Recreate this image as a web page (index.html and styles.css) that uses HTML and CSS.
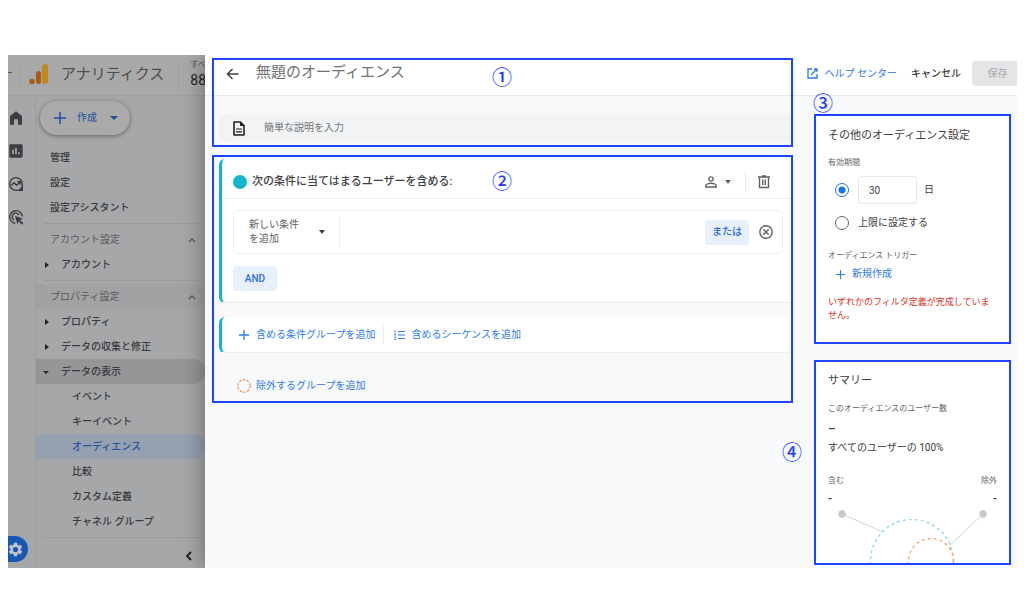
FILE: index.html
```html
<!DOCTYPE html>
<html lang="ja">
<head>
<meta charset="utf-8">
<meta name="viewport" content="width=device-width, initial-scale=1">
<title>アナリティクス</title>
<link rel="stylesheet" href="styles.css">
</head>
<body>
<div class="shell">
  <div class="app">
    <header class="app-header">
      <span class="menu-stub"></span>
      <svg class="logo" width="20" height="22" viewBox="0 0 20 22"><rect x="13" y="1" width="6" height="20" rx="3" fill="#bd8a1c"/><rect x="7" y="8" width="5" height="13" rx="2.500" fill="#ad5a14"/><circle cx="3" cy="18.500" r="2.700" fill="#ad5a14"/></svg>
      <span class="app-name">アナリティクス</span>
      <span class="account"><small>すべ</small><b>88</b></span>
    </header>
    <div class="app-body">
      <nav class="rail" aria-label="メイン">
        <a href="#" aria-label="ホーム"><svg width="16" height="16" viewBox="0 0 24 24"><path fill="#3b3d40" d="M12 2 3 9v13h6v-8h6v8h6V9z"/></svg></a>
        <a href="#" aria-label="レポート"><svg width="16" height="16" viewBox="0 0 24 24"><rect x="2" y="2" width="20" height="20" rx="2" fill="#3b3d40"/><path stroke="#a6a7a9" stroke-width="2.500" d="M7.500 10v7M12 7v10M16.500 14v3"/></svg></a>
        <a href="#" aria-label="探索"><svg width="16" height="16" viewBox="0 0 24 24" fill="none" stroke="#3b3d40" stroke-width="2"><path d="M21.500 12A9.500 9.500 0 1 0 12 21.500h9.500z"/><path d="m5 14 4-4 4 4 5-5M14 8.500h4.500V13"/><path fill="#3b3d40" d="m17 21 4-4v4z"/></svg></a>
        <a href="#" aria-label="広告"><svg width="16" height="16" viewBox="0 0 24 24" fill="none" stroke="#3b3d40" stroke-width="2"><path d="M11 21.500A9.500 9.500 0 1 1 21.500 11"/><path d="M9 16.500A5.500 5.500 0 1 1 16.500 9"/><path fill="#3b3d40" stroke="none" d="m10.500 10.500 12 4-4.500 2 5 5-2 2-5-5-2 4.500z"/></svg></a>
        <a href="#" class="gear" aria-label="管理"><svg width="17" height="17" viewBox="0 0 24 24"><path fill="#bcc3ce" d="M19.140 12.940c.04-.3.06-.61.06-.94s-.02-.64-.07-.94l2.030-1.580a.49.49 0 0 0 .12-.61l-1.920-3.320a.49.49 0 0 0-.59-.22l-2.390.96a7 7 0 0 0-1.620-.94l-.36-2.540a.48.48 0 0 0-.48-.41h-3.840a.48.48 0 0 0-.47.41l-.36 2.540a7 7 0 0 0-1.620.94l-2.390-.96a.49.49 0 0 0-.59.22L2.740 8.870a.48.48 0 0 0 .12.61l2.030 1.580a6 6 0 0 0 0 1.880l-2.030 1.580a.49.49 0 0 0-.12.61l1.920 3.320c.12.22.37.29.59.22l2.390-.96c.5.38 1.030.7 1.620.94l.36 2.540c.05.24.24.41.48.41h3.840c.24 0 .44-.17.47-.41l.36-2.540a7 7 0 0 0 1.620-.94l2.390.96c.22.08.47 0 .59-.22l1.920-3.320a.48.48 0 0 0-.12-.61zM12 15.600a3.600 3.600 0 1 1 0-7.200 3.600 3.600 0 0 1 0 7.200z"/></svg></a>
      </nav>
      <nav class="side" aria-label="管理メニュー">
        <button class="create"><svg width="12" height="12" viewBox="0 0 12 12"><path stroke="currentColor" stroke-width="1.500" d="M6 0v12M0 6h12"/></svg><span>作成</span><i class="caret"></i></button>
        <a class="row" href="#">管理</a>
        <a class="row" href="#">設定</a>
        <a class="row" href="#">設定アシスタント</a>
        <hr>
        <a class="row section" href="#">アカウント設定<svg width="8" height="6" viewBox="0 0 8 6"><path d="m1 5 3-3 3 3" fill="none" stroke="currentColor" stroke-width="1.300"/></svg></a>
        <a class="row parent" href="#">アカウント</a>
        <hr>
        <a class="row section shaded" href="#">プロパティ設定<svg width="8" height="6" viewBox="0 0 8 6"><path d="m1 5 3-3 3 3" fill="none" stroke="currentColor" stroke-width="1.300"/></svg></a>
        <a class="row parent" href="#">プロパティ</a>
        <a class="row parent" href="#">データの収集と修正</a>
        <a class="row parent open" href="#">データの表示</a>
        <a class="row child" href="#">イベント</a>
        <a class="row child" href="#">キーイベント</a>
        <a class="row child current" href="#">オーディエンス</a>
        <a class="row child" href="#">比較</a>
        <a class="row child" href="#">カスタム定義</a>
        <a class="row child" href="#">チャネル グループ</a>
        <hr>
        <button class="collapse" aria-label="折りたたむ"><svg width="8" height="10" viewBox="0 0 8 10"><path d="M6 1 2 5l4 4" fill="none" stroke="#1c1d1e" stroke-width="1.800"/></svg></button>
      </nav>
    </div>
  </div>

  <main class="panel">
    <header class="panel-header">
      <button class="plain" aria-label="戻る"><svg width="13" height="12" viewBox="0 0 13 12"><path d="M12.500 6H1.500M6.500 1l-5 5 5 5" fill="none" stroke="#3c4043" stroke-width="1.500"/></svg></button>
      <input class="title" type="text" placeholder="無題のオーディエンス" aria-label="オーディエンス名">
      <a class="help" href="#"><svg width="11" height="11" viewBox="0 0 11 11"><path d="M5 1H1v9h9V6M7 1h3v3M10 1 4 7" fill="none" stroke="currentColor" stroke-width="1.300"/></svg>ヘルプ センター</a>
      <button class="plain cancel">キャンセル</button>
      <button class="save" disabled>保存</button>
    </header>
    <div class="panel-body">
      <div class="builder">
        <label class="description">
          <svg width="14" height="15" viewBox="0 0 14 15"><path d="M2 1h6.500L12 4.500V14H2z" fill="none" stroke="#202124" stroke-width="1.600" stroke-linejoin="round"/><path d="M8 1v4h4z" fill="#202124"/><path d="M4 8h6M4 10.800h6" stroke="#202124" stroke-width="1.200"/></svg>
          <input type="text" placeholder="簡単な説明を入力" aria-label="説明">
        </label>
        <section class="group">
          <div class="group-head">
            <span class="dot"></span>
            <h2>次の条件に当てはまるユーザーを含める:</h2>
            <button class="plain scope" aria-label="スコープ"><svg width="12" height="12" viewBox="0 0 12 12" fill="none" stroke="#5f6368" stroke-width="1.400"><circle cx="6" cy="3" r="2.100"/><path d="M.8 11V9.500C.8 8 4 7.200 6 7.200S11.200 8 11.200 9.500V11z"/></svg><i class="caret"></i></button>
            <button class="plain trash" aria-label="削除"><svg width="12" height="14" viewBox="0 0 12 14" fill="none" stroke="#5f6368" stroke-width="1.400"><path d="M0 2h12M4 1h4M1.500 2v10.500h9V2M4.700 4.500V10M7.300 4.500V10"/></svg></button>
          </div>
          <div class="group-body">
            <div class="condition">
              <button class="add-condition"><span>新しい条件<br>を追加</span><i class="caret"></i></button>
              <button class="chip">または</button>
              <button class="plain" aria-label="条件を削除"><svg width="14" height="14" viewBox="0 0 14 14" fill="none" stroke="#5f6368" stroke-width="1.400"><circle cx="7" cy="7" r="6.200"/><path d="m4.300 4.300 5.400 5.400m0-5.400-5.400 5.400"/></svg></button>
            </div>
            <button class="chip">AND</button>
          </div>
        </section>
        <section class="group adders">
          <button class="link"><svg width="10" height="10" viewBox="0 0 10 10"><path stroke="currentColor" stroke-width="1.300" d="M5 0v10M0 5h10"/></svg>含める条件グループを追加</button>
          <button class="link"><svg width="11" height="10" viewBox="0 0 11 10"><path d="M4 1.500h7M4 5h7M4 8.500h7" stroke="currentColor" stroke-width="1.200"/><path d="M0 .8h1.300v2M0 4h2L.3 6H2M0 7.500h1.800v2H0" fill="none" stroke="currentColor" stroke-width=".7"/></svg>含めるシーケンスを追加</button>
        </section>
        <button class="link exclude"><svg width="14" height="14" viewBox="0 0 14 14"><circle cx="7" cy="7" r="6.200" fill="none" stroke="#f08a4b" stroke-width="1.200" stroke-dasharray="2.400 1.500"/></svg>除外するグループを追加</button>
      </div>

      <aside class="info">
        <section class="card settings">
          <h2>その他のオーディエンス設定</h2>
          <p class="caption">有効期間</p>
          <div class="choice days"><input type="radio" name="term" id="term-days" checked><input class="number" type="text" value="30" aria-label="有効期間の日数"><label for="term-days">日</label></div>
          <div class="choice"><input type="radio" name="term" id="term-max"><label for="term-max">上限に設定する</label></div>
          <p class="caption trigger">オーディエンス トリガー</p>
          <button class="link create-trigger"><svg width="9" height="9" viewBox="0 0 10 10"><path stroke="currentColor" stroke-width="1.300" d="M5 0v10M0 5h10"/></svg>新規作成</button>
          <p class="error">いずれかのフィルタ定義が完成していません。</p>
        </section>
        <section class="card summary">
          <h2>サマリー</h2>
          <p class="caption">このオーディエンスのユーザー数</p>
          <p class="value">–</p>
          <p class="share">すべてのユーザーの 100%</p>
          <div class="split caption"><span>含む</span><span>除外</span></div>
          <div class="split value"><span>-</span><span>-</span></div>
          <svg class="venn" viewBox="0 0 193 58" fill="none"><path d="m26 9 41 18M167 9l-34 32" stroke="#d4d4d4"/><circle cx="26" cy="9" r="3.700" fill="#c8c8c8"/><circle cx="167" cy="9" r="3.700" fill="#c8c8c8"/><circle cx="96" cy="56" r="41.500" stroke="#93d9e8" stroke-width="1.400" stroke-dasharray="3 3"/><circle cx="115" cy="56" r="22.500" stroke="#f7a678" stroke-width="1.400" stroke-dasharray="3 3"/></svg>
        </section>
      </aside>
    </div>
    <div class="callout callout-name"><span class="num">①</span></div>
    <div class="callout callout-builder"><span class="num">②</span></div>
    <span class="num num-settings">③</span>
    <span class="num num-summary">④</span>
  </main>
</div>
</body>
</html>
```
FILE: styles.css
```css
* { box-sizing: border-box; }
body {
  margin: 0;
  padding: 55px 7px 46px 8px;
  background: #fff;
  color: #3c4043;
  font: 10px/16px Roboto, "Noto Sans CJK JP", sans-serif;
}
h2, p { margin: 0; font-weight: 400; }
a { color: inherit; text-decoration: none; }
button, input { font: inherit; color: inherit; }
button { padding: 0; border: 0; background: none; }
svg { display: block; flex: none; }
.plain { display: flex; align-items: center; }

.shell { display: grid; grid-template-columns: 197px minmax(0, 1fr); overflow: hidden; }

/* dimmed application behind the panel */
.app { display: flex; flex-direction: column; min-width: 0; overflow: hidden; background: #a6a7a9; color: #3a3b3e; }
.app-header { display: flex; align-items: center; height: 41px; padding-bottom: 2px; background: #a9a9a9; border-bottom: 1px solid #9fa0a1; white-space: nowrap; }
.menu-stub { flex: none; width: 12px; height: 24px; border-right: 1px solid #9f9f9f; background: linear-gradient(#555, #555) 0 10px / 4px 1px no-repeat; }
.logo { margin-left: 9px; }
.app-name { margin-left: 12px; font-size: 15px; color: #4c4d50; }
.account { display: flex; flex-direction: column; margin-left: 14px; padding-left: 11px; border-left: 1px solid #a0a0a0; color: #222; }
.account small { font-size: 8px; line-height: 12px; color: #4c4d50; }
.account b { font-weight: 400; font-size: 14px; line-height: 18px; }
.app-body { flex: 1; display: flex; }
.rail { display: flex; flex-direction: column; gap: 17px; width: 28px; padding-top: 14px; border-right: 1px solid #9c9d9f; }
.gear { display: flex; align-items: center; justify-content: flex-end; width: 20px; height: 26px; margin: auto 0 6px; padding-right: 4px; border-radius: 0 13px 13px 0; background: #1858b0; }
.side { flex: 1; display: flex; flex-direction: column; padding-top: 5px; }
.create { display: flex; align-items: center; align-self: flex-start; gap: 11px; width: 90px; height: 34px; margin: 0 0 10px 4px; padding-left: 14px; border-radius: 17px; background: #aaa; color: #1d4f9e; box-shadow: 0 1px 4px rgba(0, 0, 0, .4); }
.caret { display: block; border: 3px solid transparent; border-top: 4px solid; border-bottom: 0; }
.create .caret { margin-left: 2px; border-width: 4px 4px 0; }
.row { display: flex; align-items: center; height: 25px; padding: 1px 9px 0 14px; border-radius: 0 12px 12px 0; font-weight: 500; }
.section { justify-content: space-between; color: #58595c; font-weight: 400; }
.shaded { background: #a1a2a3; }
.parent { gap: 12px; padding-left: 9px; }
.parent::before { content: ""; border: 3px solid transparent; border-left: 4px solid #222; border-right: 0; }
.open { gap: 12px; padding-left: 7px; background: #959698; }
.open::before { border: 3px solid transparent; border-top: 3px solid #222; border-bottom: 0; }
.child { padding-left: 36px; }
.current { background: #95a0b1; color: #2a559c; }
.side hr { height: 1px; margin: 3px 6px 3px 8px; border: 0; background: #999a9c; }
.collapse { align-self: flex-end; margin: 10px 12px 6px 0; }

/* audience editor */
.panel { position: relative; display: flex; flex-direction: column; background: #f8f9fa; box-shadow: 0 0 22px rgba(0, 0, 0, .4); }
.panel-header { display: flex; align-items: center; height: 41px; padding-left: 21px; padding-bottom: 3px; border-bottom: 1px solid #e8eaed; background: #fff; }
.title { flex: 1; min-width: 0; height: 24px; margin-left: 17px; padding: 0 0 3px; border: 0; background: none; font-size: 15px; }
.title::placeholder { color: #6f7377; opacity: 1; }
.help, .link { display: flex; align-items: center; color: #2f7be8; font-weight: 400; }
.help { gap: 7px; }
.cancel { margin: 0 11px 0 14px; font-weight: 500; }
.save { width: 45px; height: 25px; padding-left: 6px; border-radius: 3px 0 0 3px; background: #e4e5e6; color: #a9abad; }
.panel-body { flex: 1; display: grid; grid-template-columns: minmax(0, 1fr) 197px; gap: 22px; padding: 17px 6px 3px 14px; }

.description { display: flex; align-items: center; gap: 18px; height: 30px; margin-bottom: 16px; padding-left: 13px; border-radius: 8px 0 0 8px; background: #f1f3f4; }
.description input { flex: 1; padding: 0; border: 0; background: none; }
.description input::placeholder { color: #6f7377; opacity: 1; }
.group { border: 1px solid #eceef0; border-left: 3px solid #12b5cb; border-right: 0; border-top: 0; border-radius: 6px 0 0 6px; background: #fff; }
.group-head { display: flex; align-items: center; height: 40px; padding: 7px 22px 0 11px; border-bottom: 1px solid #eceef0; }
.dot { width: 14px; height: 14px; border-radius: 50%; background: #12b5cb; }
.group-head h2 { flex: 1; margin-left: 5px; font-size: 11px; font-weight: 500; color: #3c4043; }
.scope { gap: 8px; height: 22px; padding-right: 14px; border-right: 1px solid #e8eaed; color: #5f6368; }
.trash { margin-left: 12px; }
.group-body { display: flex; flex-direction: column; align-items: flex-start; gap: 12px; padding: 11px 9px 11px 11px; }
.condition { display: flex; align-items: center; align-self: stretch; gap: 10px; height: 44px; padding-right: 9px; border: 1px solid #eceef0; border-radius: 6px; }
.add-condition { display: flex; align-items: center; justify-content: space-between; width: 106px; height: 32px; margin-right: auto; padding: 0 14px 0 15px; border-right: 1px solid #eceef0; color: #5f6368; line-height: 14px; text-align: left; }
.add-condition .caret { color: #3c4043; }
.chip { width: 44px; height: 25px; border-radius: 3px; background: #e8f0fe; color: #2b6fd6; font-weight: 500; }
.adders { display: flex; align-items: center; height: 36px; margin-top: 14px; padding-left: 17px; }
.adders .link { gap: 7px; height: 18px; }
.adders .link + .link { gap: 6px; margin-left: 8px; padding-left: 10px; border-left: 1px solid #e8eaed; }
.exclude { gap: 5px; height: 20px; margin: 23px 0 0 18px; }

.info { display: flex; flex-direction: column; gap: 16px; padding-top: 1px; }
.card { padding: 12px 12px 0; border: 2px solid #1f44ff; background: #fff; }
.card h2 { font-size: 11px; }
.caption { font-size: 8px; line-height: 12px; color: #5f6368; }
.settings { height: 230px; }
.settings .caption { margin: 13px 0 7px; }
.choice { display: flex; align-items: center; gap: 9px; height: 20px; padding-left: 7px; }
.days { height: 28px; margin-bottom: 9px; }
.choice input[type="radio"] { flex: none; appearance: none; width: 14px; height: 14px; margin: 0; border: 1px solid #5f6368; border-radius: 50%; }
.choice input[type="radio"]:checked { border: 1px solid #1a73e8; background: radial-gradient(#1a73e8 3px, transparent 4px); }
.number { width: 59px; height: 28px; padding: 0 10px; border: 1px solid #e4e6e8; border-radius: 3px; }
.days label { margin-left: -2px; }
.settings .trigger { margin: 17px 0 4px; }
.create-trigger { gap: 7px; padding-left: 8px; }
.error { margin-top: 14px; color: #d93025; font-size: 9px; line-height: 13px; }
.summary { height: 205px; overflow: hidden; }
.summary h2 { margin-top: -1px; }
.summary .caption { margin-top: 14px; }
.value { margin-top: 8px; font-size: 12px; line-height: 12px; font-weight: 500; }
.share { margin-top: 5px; }
.split { display: flex; justify-content: space-between; }
.summary .split { margin-top: 19px; }
.summary .split.value { margin-top: 6px; }
.venn { width: calc(100% + 24px); margin: 0 -12px; }

/* numbered call-outs laid over the screen */
.callout { position: absolute; left: 7px; right: 224px; border: 2px solid #1f44ff; pointer-events: none; }
.callout-name { top: 3px; height: 89px; }
.callout-builder { top: 100px; height: 248px; }
.num { position: absolute; color: #1f3cff; font: 500 20px/20px "Noto Sans CJK JP", sans-serif; }
.callout .num { left: 278px; top: 7px; }
.callout-builder .num { top: 14px; }
.num-settings { right: 184px; top: 38px; }
.num-summary { right: 215px; top: 387px; }
```
